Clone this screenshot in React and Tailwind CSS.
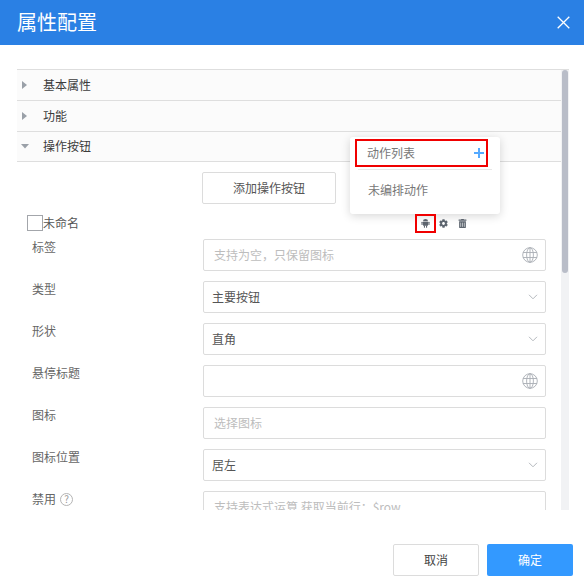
import React from "react";
import { FaCog, FaTrashAlt } from "react-icons/fa";

const Caret = ({ open }) => (
  <svg width="8" height="8" viewBox="0 0 8 8" className="shrink-0">
    {open ? <path d="M0 2h8L4 6.5z" fill="#9aa0a8" /> : <path d="M1 0v8L6 4z" fill="#9aa0a8" />}
  </svg>
);

const Section = ({ title, open, h }) => (
  <div className={`flex items-center border-b border-[#dedede] bg-[#fbfbfb] pb-[1px] pl-[4px] ${h}`}>
    <Caret open={open} />
    <span className="ml-[14px] text-[12px] text-[#3c3c3c]">{title}</span>
  </div>
);

const Globe = () => (
  <svg width="16" height="16" viewBox="0 0 16 16" fill="none" stroke="#a9aeb4" strokeWidth="0.9">
    <circle cx="8" cy="8" r="7.3" />
    <ellipse cx="8" cy="8" rx="3.4" ry="7.3" />
    <path d="M8 .7v14.6M1 5.5h14M1 10.5h14" />
  </svg>
);

const Chevron = () => (
  <svg width="10" height="6" viewBox="0 0 10 6" fill="none" stroke="#b4b8bd" strokeWidth="1">
    <path d="M1 .8l4 4 4-4" />
  </svg>
);

const Android = () => (
  <svg width="9" height="10" viewBox="0 0 9 10" fill="#5e6670" className="shrink-0">
    <path d="M2 3.3a2.5 2.4 0 0 1 5 0z" />
    <rect x="2" y="3.7" width="5" height="4" rx="0.4" />
    <rect x="0.5" y="3.7" width="1.1" height="3.3" rx="0.5" />
    <rect x="7.4" y="3.7" width="1.1" height="3.3" rx="0.5" />
    <rect x="2.9" y="7.2" width="1.1" height="2.6" rx="0.5" />
    <rect x="5" y="7.2" width="1.1" height="2.6" rx="0.5" />
  </svg>
);

const Field = ({ label, value, placeholder, icon, help }) => (
  <div className="flex h-[32px] items-start">
    <div className="flex w-[186px] items-center pl-[15px] text-[12px] leading-[16px] text-[#666]">
      {label}
      {help && (
        <span className="ml-[4px] flex h-[13px] w-[13px] items-center justify-center rounded-full border border-[#b4b4b4] text-[10px] leading-none text-[#999]">?</span>
      )}
    </div>
    <div className="flex h-[32px] w-[343px] items-center justify-between rounded-[2px] border border-[#dcdcdc] bg-white pb-[1px] pl-[8px] pr-[7px] text-[12px]">
      {value ? <span className="text-[#555]">{value}</span> : <span className="pl-[2px] text-[#bdbdbd]">{placeholder}</span>}
      {icon}
    </div>
  </div>
);

export default function App() {
  return (
    <div className="flex h-[583px] w-[584px] flex-col overflow-hidden bg-white font-['Noto_Sans_CJK_SC','Liberation_Sans',sans-serif]">
      <header className="flex h-[45px] shrink-0 items-center justify-between bg-[#2a80e4] pl-[17px] pr-[14px]">
        <h1 className="pb-[2px] text-[20px] leading-none text-white">属性配置</h1>
        <svg width="13" height="13" viewBox="0 0 13 13" stroke="#fff" strokeWidth="1.3" fill="none">
          <path d="M.7.7l11.6 11.6M12.3.7L.7 12.3" />
        </svg>
      </header>

      <main className="relative mx-[17px] mt-[24px] h-[441px] w-[552px] shrink-0 overflow-hidden border-t border-[#dedede]">
        <div className="w-[544px]">
          <Section title="基本属性" h="h-[31px]" />
          <Section title="功能" h="h-[31px]" />
          <Section title="操作按钮" open h="h-[30px]" />
          <div className="pl-[185px] pt-[10px]">
            <button className="flex h-[32px] w-[134px] items-center justify-center rounded-[2px] border border-[#dcdcdc] bg-white pb-[1px] text-[12px] text-[#555]">添加操作按钮</button>
          </div>
          <div className="mt-[11px] flex h-[16px] items-center pl-[10px]">
            <span className="h-[16px] w-[16px] border border-[#a3a6ab] bg-white" />
            <span className="text-[12px] text-[#555]">未命名</span>
            <div className="ml-[342px] flex items-center text-[#5e6670]">
              <Android />
              <FaCog size={9} className="ml-[9px]" />
              <FaTrashAlt size={9} className="ml-[10px]" />
            </div>
          </div>
          <div className="mt-[8px] flex flex-col gap-[10px]">
            <Field label="标签" placeholder="支持为空，只保留图标" icon={<Globe />} />
            <Field label="类型" value="主要按钮" icon={<Chevron />} />
            <Field label="形状" value="直角" icon={<Chevron />} />
            <Field label="悬停标题" icon={<Globe />} />
            <Field label="图标" placeholder="选择图标" />
            <Field label="图标位置" value="居左" icon={<Chevron />} />
            <Field label="禁用" help placeholder="支持表达式运算 获取当前行：$row" />
          </div>
        </div>

        <div className="absolute right-0 top-0 bottom-0 w-[8px] bg-[#f1f2f4] pl-[1px] pr-[1px]">
          <div className="h-[203px] rounded-[3px] bg-[#b9bdc8]" />
        </div>

        <div className="absolute left-[333px] top-[67px] h-[77px] w-[150px] rounded-[3px] bg-white pt-[2px] shadow-[0_2px_10px_rgba(0,0,0,0.16)]">
          <div className="ml-[5px] flex h-[28px] w-[133px] items-center justify-between border-2 border-[#f00000] pl-[10px] pr-[2px] text-[12px] text-[#777]">
            <span>动作列表</span>
            <svg width="10" height="10" viewBox="0 0 10 10" stroke="#55aaff" strokeWidth="2"><path d="M5 0v10M0 5h10" /></svg>
          </div>
          <div className="ml-[8px] mr-[8px] mt-[2px] border-t border-[#e8e8e8]" />
          <div className="mt-[11px] pl-[18px] text-[12px] leading-[18px] text-[#777]">未编排动作</div>
        </div>

        <div className="absolute left-[398px] top-[144px] h-[19px] w-[21px] border-2 border-[#f00000]" />
      </main>

      <footer className="flex flex-1 items-start justify-end gap-[8px] pr-[11px] pt-[34px]">
        <button className="h-[32px] w-[86px] rounded-[2px] border border-[#dcdcdc] bg-white pb-[1px] text-[12px] text-[#444]">取消</button>
        <button className="h-[32px] w-[86px] rounded-[2px] bg-[#3399ff] pb-[1px] text-[12px] text-white">确定</button>
      </footer>
    </div>
  );
}
